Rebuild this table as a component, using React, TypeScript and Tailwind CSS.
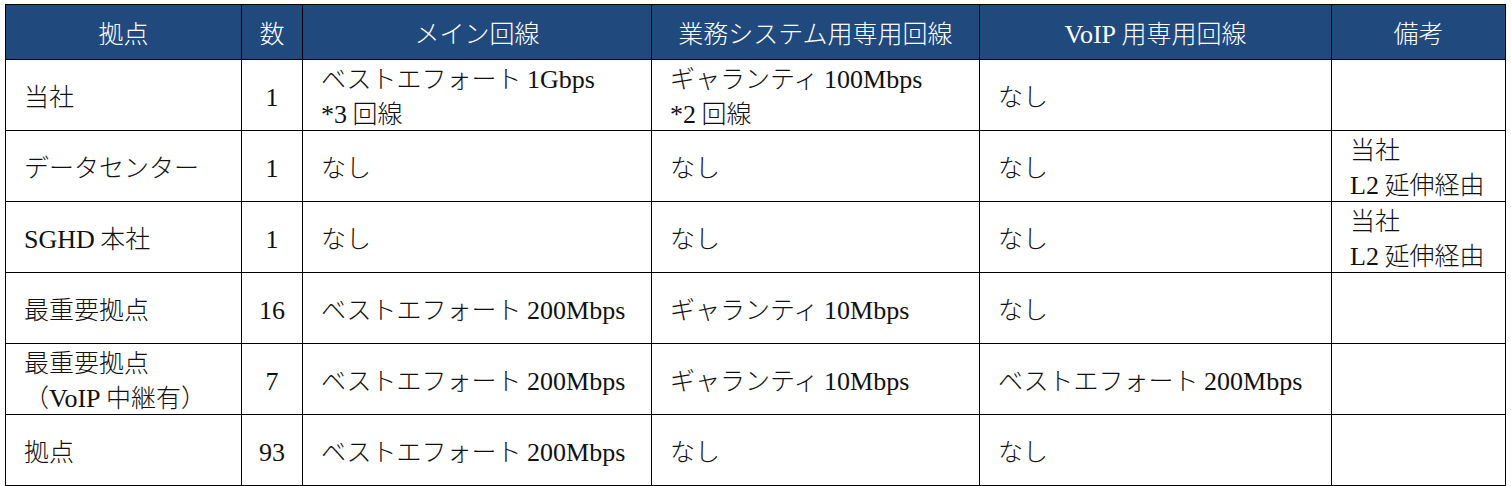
import React from 'react';

type Row = {
  site: string[];
  count: string;
  main: string[];
  business: string[];
  voip: string[];
  note: string[];
};

const rows: Row[] = [
  { site: ['当社'], count: '1', main: ['ベストエフォート 1Gbps', '*3 回線'], business: ['ギャランティ 100Mbps', '*2 回線'], voip: ['なし'], note: [] },
  { site: ['データセンター'], count: '1', main: ['なし'], business: ['なし'], voip: ['なし'], note: ['当社', 'L2 延伸経由'] },
  { site: ['SGHD 本社'], count: '1', main: ['なし'], business: ['なし'], voip: ['なし'], note: ['当社', 'L2 延伸経由'] },
  { site: ['最重要拠点'], count: '16', main: ['ベストエフォート 200Mbps'], business: ['ギャランティ 10Mbps'], voip: ['なし'], note: [] },
  { site: ['最重要拠点', '（VoIP 中継有）'], count: '7', main: ['ベストエフォート 200Mbps'], business: ['ギャランティ 10Mbps'], voip: ['ベストエフォート 200Mbps'], note: [] },
  { site: ['拠点'], count: '93', main: ['ベストエフォート 200Mbps'], business: ['なし'], voip: ['なし'], note: [] },
];

const headers = ['拠点', '数', 'メイン回線', '業務システム用専用回線', 'VoIP 用専用回線', '備考'];
const widths = ['w-[236px]', 'w-[61px]', 'w-[349px]', 'w-[328px]', 'w-[352px]', 'w-[174px]'];

// latin runs get the serif face a bit larger, like Century next to Mincho
const Mixed: React.FC<{ text: string }> = ({ text }) => (
  <>
    {text.split(/([A-Za-z0-9*]+)/).map((part, i) =>
      /^[A-Za-z0-9*]+$/.test(part) ? (
        <span key={i} className="font-['Liberation_Serif'] text-[26px] leading-none font-normal">{part}</span>
      ) : (
        <span key={i}>{part}</span>
      )
    )}
  </>
);

const Lines: React.FC<{ lines: string[] }> = ({ lines }) => (
  <>
    {lines.map((l, i) => (
      <div key={i} className="whitespace-nowrap h-[35px] leading-[35px]">
        <Mixed text={l} />
      </div>
    ))}
  </>
);

export default function App() {
  const cell = 'border border-black h-[71px] align-middle pl-[18px] py-0';
  return (
    <div
      className="bg-white min-h-[486px] pt-[4px] pl-[5px] text-[25px] font-light text-[#111]"
      style={{ fontFamily: '"Noto Sans CJK JP", "Liberation Serif", serif' }}
    >
      <table className="table-fixed border-collapse w-[1500px]">
        <colgroup>
          {widths.map((w, i) => (
            <col key={i} className={w} />
          ))}
        </colgroup>
        <thead>
          <tr>
            {headers.map((h) => (
              <th key={h} className="border border-black bg-[#204a7e] text-white font-light h-[55px] p-0 leading-[35px] text-center align-middle whitespace-nowrap">
                <Mixed text={h} />
              </th>
            ))}
          </tr>
        </thead>
        <tbody>
          {rows.map((r, i) => (
            <tr key={i}>
              <td className={cell}><Lines lines={r.site} /></td>
              <td className="border border-black h-[71px] p-0 align-middle text-center">
                <div className="h-[35px] leading-[35px]"><Mixed text={r.count} /></div>
              </td>
              <td className={cell}><Lines lines={r.main} /></td>
              <td className={cell}><Lines lines={r.business} /></td>
              <td className={cell}><Lines lines={r.voip} /></td>
              <td className={cell}><Lines lines={r.note} /></td>
            </tr>
          ))}
        </tbody>
      </table>
    </div>
  );
}
